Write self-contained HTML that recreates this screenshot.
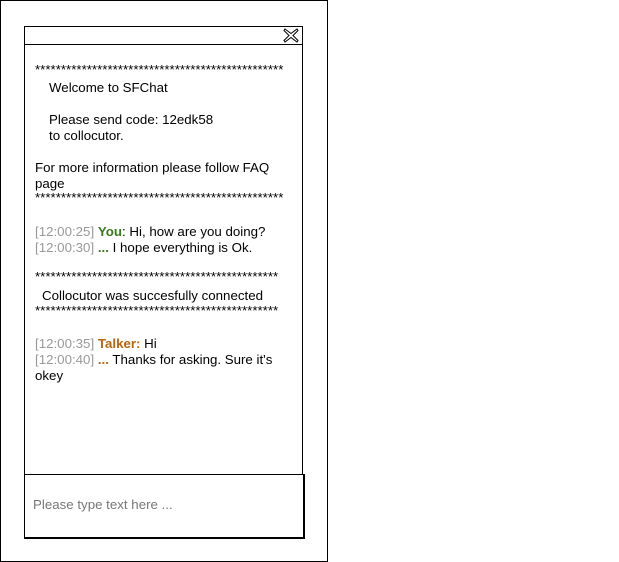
<!DOCTYPE html>
<html><head><style>
body{margin:0;width:619px;height:562px;background:#fff;font-family:"Liberation Sans",Arial,sans-serif;font-size:13.3px;color:#000;position:relative;overflow:hidden}
.a{position:absolute;white-space:nowrap;line-height:16px}
.s{font-size:13.3px}
.g{color:#999}
.y{color:#3a7a1e;font-weight:bold}
.t{color:#b8650f;font-weight:bold}
</style></head><body>
<div style="position:absolute;left:0;top:0;width:326px;height:560px;border:1px solid #000"></div>
<div style="position:absolute;left:24px;top:26px;width:277px;height:448px;border:1px solid #000"></div>
<div style="position:absolute;left:25px;top:44px;width:277px;height:1px;background:#000"></div>
<svg style="position:absolute;left:283px;top:28px" width="16" height="15" viewBox="0 0 16 15"><path d="M2 1 L8 5.5 L14 1 L15 2.5 L10 7.5 L15 12.5 L14 14 L8 9.5 L2 14 L1 12.5 L6 7.5 L1 2.5 Z" fill="none" stroke="#000" stroke-width="1"/></svg>
<div class="a s" style="left:35px;top:62px">************************************************</div>
<div class="a" style="left:49px;top:80px">Welcome to SFChat</div>
<div class="a" style="left:49px;top:112px">Please send code: 12edk58</div>
<div class="a" style="left:49px;top:128px">to collocutor.</div>
<div class="a" style="left:35px;top:160px">For more information please follow FAQ</div>
<div class="a" style="left:35px;top:176px">page</div>
<div class="a s" style="left:35px;top:190px">************************************************</div>
<div class="a" style="left:35px;top:224px"><span class="g">[12:00:25]</span> <span class="y">You</span>: Hi, how are you doing?</div>
<div class="a" style="left:35px;top:240px"><span class="g">[12:00:30]</span> <span class="y">...</span> I hope everything is Ok.</div>
<div class="a s" style="left:35px;top:269px">***********************************************</div>
<div class="a" style="left:42px;top:288px">Collocutor was succesfully connected</div>
<div class="a s" style="left:35px;top:303px">***********************************************</div>
<div class="a" style="left:35px;top:336px"><span class="g">[12:00:35]</span> <span class="t">Talker:</span> Hi</div>
<div class="a" style="left:35px;top:352px"><span class="g">[12:00:40]</span> <span class="t">...</span> Thanks for asking. Sure it's</div>
<div class="a" style="left:35px;top:368px">okey</div>
<div style="position:absolute;left:24px;top:474px;width:278px;height:62px;border:1px solid #000;border-width:1px 2px 2px 1px;background:#fff"></div>
<div class="a" style="left:33px;top:497px;color:#777">Please type text here ...</div>
</body></html>
